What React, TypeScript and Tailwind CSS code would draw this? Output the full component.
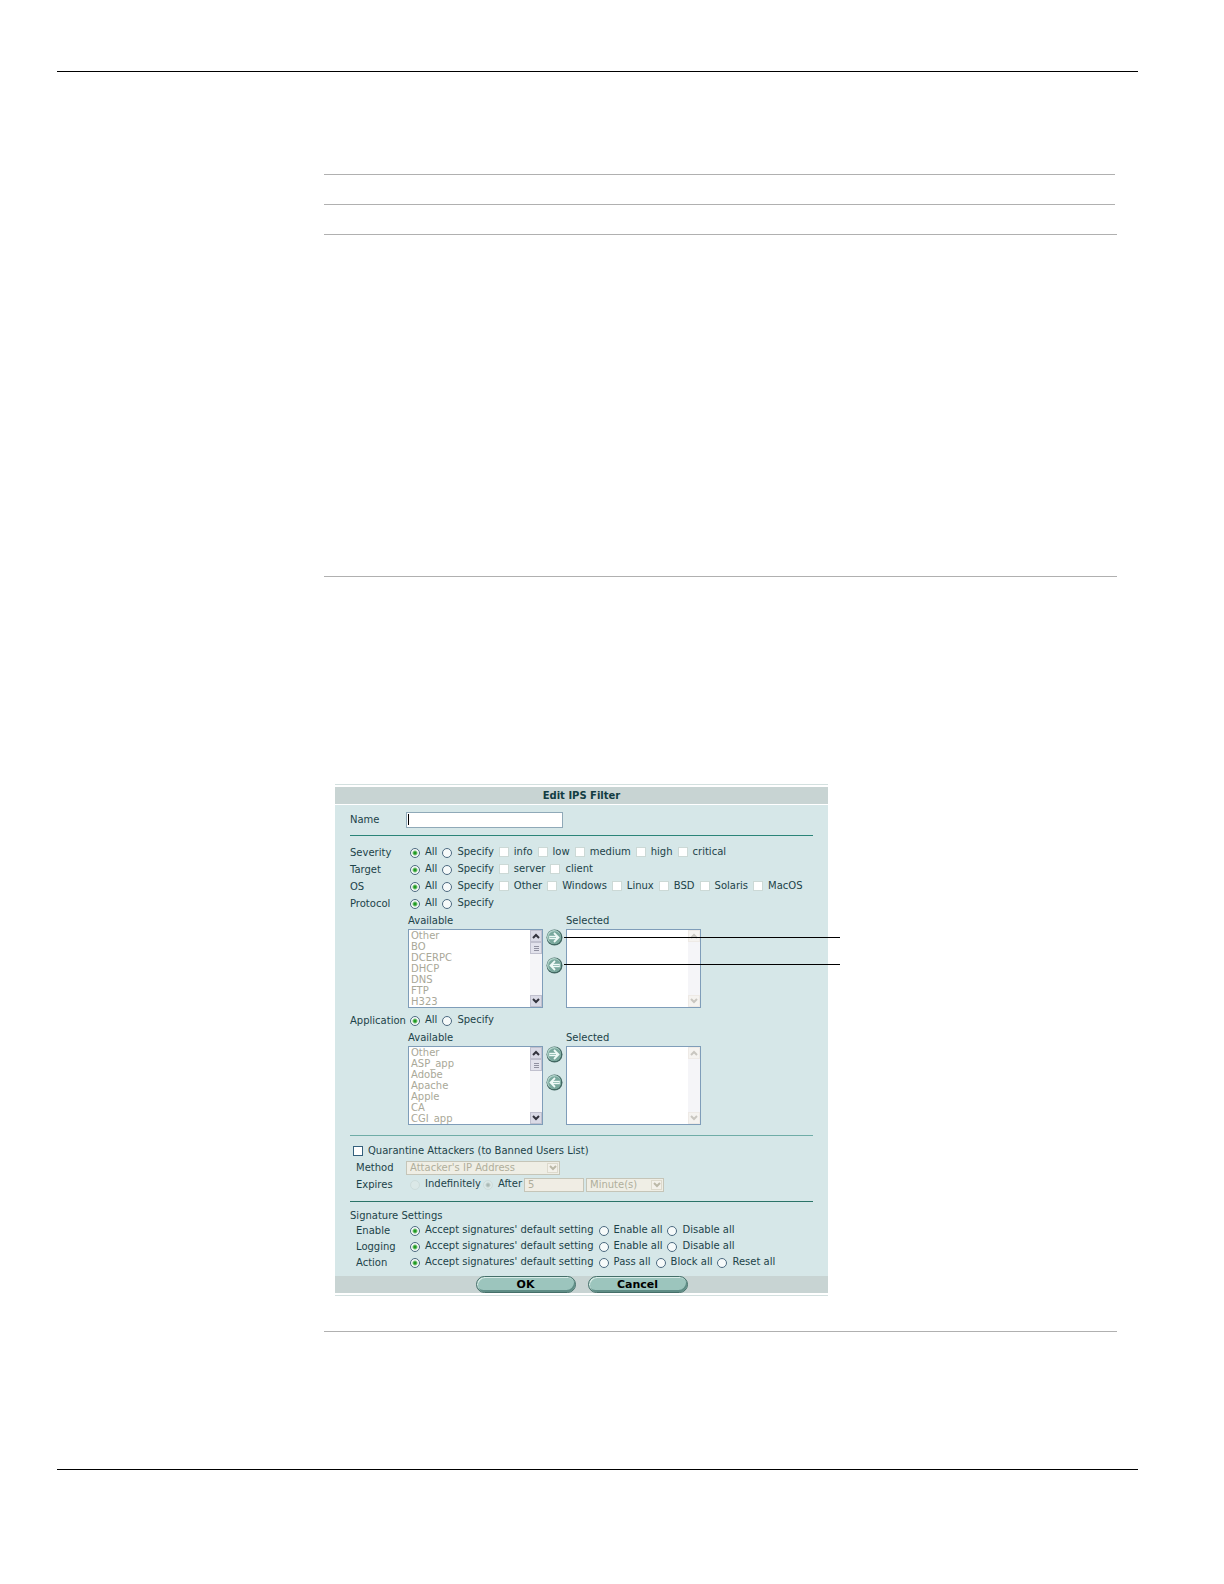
import React from "react";
import clsx from "clsx";

const protocols = ["Other", "BO", "DCERPC", "DHCP", "DNS", "FTP", "H323"];
const applications = ["Other", "ASP_app", "Adobe", "Apache", "Apple", "CA", "CGI_app"];

function Rule({ className }: { className?: string }) {
	return <hr className={clsx("h-px border-0", className)} />;
}

function Radio({
	name,
	label,
	checked,
	disabled,
}: {
	name: string;
	label: string;
	checked?: boolean;
	disabled?: boolean;
}) {
	return (
		<label className="flex h-full items-center gap-[5px]">
			<input
				type="radio"
				name={name}
				defaultChecked={checked}
				disabled={disabled}
				className="size-[10px] shrink-0 appearance-none rounded-full border border-[#4c6a80] bg-[#f6fafa] checked:bg-[radial-gradient(circle,#1f9a22_0_1px,#7cc47c_2px,#f6fafa_3px)] disabled:border-[#cddcdb] disabled:bg-[#dbe8e7] disabled:checked:bg-[radial-gradient(circle,#a9b8b4_0_1px,#dbe8e7_3px)]"
			/>
			<span className="-mt-[2px]">{label}</span>
		</label>
	);
}

function Check({ label }: { label: string }) {
	return (
		<label className="-mt-[2px] flex h-full items-center gap-[5px]">
			<input
				type="checkbox"
				disabled
				className="size-[10px] shrink-0 appearance-none border border-[#ccd9d6] bg-white"
			/>
			<span>{label}</span>
		</label>
	);
}

function Row({ label, children }: { label: string; children: React.ReactNode }) {
	return (
		<div className="flex h-[17px] items-center" role="group" aria-label={label}>
			<span className="w-[60px] shrink-0">{label}</span>
			<div className="flex h-full items-center gap-[5px]">{children}</div>
		</div>
	);
}

function Chevron({ up, className }: { up?: boolean; className?: string }) {
	return (
		<svg viewBox="0 0 8 6" className={clsx("h-[6px] w-2", className)} fill="none" stroke="currentColor" strokeWidth="2">
			<path d={up ? "M1 5 4 2l3 3" : "M1 1l3 3 3-3"} />
		</svg>
	);
}

function ListBox({ label, items }: { label: string; items: string[] }) {
	const empty = items.length === 0;
	return (
		<label className="block w-[135px]">
			<span className="block h-[15px]">{label}</span>
			<span className="flex h-[79px] border border-[#7f9db9] bg-white">
				<select
					multiple
					disabled
					className="h-full min-w-0 flex-1 appearance-none overflow-hidden bg-white opacity-100 outline-none [scrollbar-width:none]"
				>
					{items.map((item) => (
						<option key={item} className="h-[11px] min-h-0 px-[2px] py-0 leading-[11px] text-[#a9a898]">
							{item}
						</option>
					))}
				</select>
				<span
					className={clsx(
						"flex w-3 flex-col items-center bg-[#f5f5f8]",
						empty ? "text-[#c9c6c0]" : "text-[#33333d]"
					)}
				>
					<span
						className={clsx(
							"flex h-3 w-full items-center justify-center border",
							empty ? "border-[#eeeae6] bg-[#f5f3f0]" : "border-[#c0c0ce] bg-[#dadae6]"
						)}
					>
						<Chevron up />
					</span>
					{!empty && (
						<span className="flex h-3 w-full flex-col items-center justify-center gap-px border border-[#c0c0ce] bg-[#e2e2ec]">
							<span className="h-px w-[5px] bg-[#9090a0]" />
							<span className="h-px w-[5px] bg-[#9090a0]" />
							<span className="h-px w-[5px] bg-[#9090a0]" />
						</span>
					)}
					<span
						className={clsx(
							"mt-auto flex h-3 w-full items-center justify-center border",
							empty ? "border-[#eeeae6] bg-[#f5f3f0]" : "border-[#c0c0ce] bg-[#dadae6]"
						)}
					>
						<Chevron />
					</span>
				</span>
			</span>
		</label>
	);
}

function MoveButton({ left }: { left?: boolean }) {
	return (
		<button type="button" aria-label={left ? "Remove" : "Add"} className="block size-[17px]">
			<svg viewBox="0 0 17 17" className="size-[17px]">
				<circle cx="8.5" cy="8.5" r="8" fill="#426862" />
				<circle cx="8" cy="8" r="7" fill="#b4d6cd" />
				<circle cx="8.6" cy="8.6" r="6.4" fill="#79a89d" />
				<g transform={left ? "translate(17 0) scale(-1 1)" : undefined} fill="none" stroke="#effaf7">
					<path d="M3.2 8.5H11" strokeWidth="3.4" />
					<path d="M8 4l4.5 4.5L8 13" strokeWidth="1.8" />
					<path d="M3.6 8.5H10" stroke="#9cc4bb" strokeWidth="1" />
				</g>
			</svg>
		</button>
	);
}

function Picker({ items, callouts }: { items: string[]; callouts?: boolean }) {
	return (
		<div className="relative mt-[2px] ml-[58px] flex">
			<ListBox label="Available" items={items} />
			<div className="flex w-[23px] flex-col items-center gap-[11px] pt-[15px]">
				<MoveButton />
				<MoveButton left />
			</div>
			<ListBox label="Selected" items={[]} />
			{callouts && (
				<div className="absolute top-[23px] left-[156px] flex w-[276px] flex-col gap-[26px]">
					<Rule className="bg-black" />
					<Rule className="bg-black" />
				</div>
			)}
		</div>
	);
}

function DisabledSelect({ label, value, className }: { label: string; value: string; className?: string }) {
	return (
		<div className={clsx("relative", className)}>
			<select
				aria-label={label}
				disabled
				className="block h-[14px] w-full appearance-none border border-[#c5c5b8] bg-[#efeee5] px-[3px] leading-[12px] text-[#b0ae9c] opacity-100"
			>
				<option>{value}</option>
			</select>
			<span className="pointer-events-none absolute inset-y-[2px] right-[2px] flex w-[11px] items-center justify-center border border-[#dddacd] bg-[#f3f1ea] text-[#bcb9a8]">
				<Chevron />
			</span>
		</div>
	);
}

function PillButton({ children }: { children: string }) {
	return (
		<button
			type="button"
			className="h-[17px] w-[100px] rounded-full border border-[#456f69] bg-[#9cc5bd] text-[11px] leading-[16px] font-bold text-black shadow-[inset_1px_1px_0_#d8ece7,inset_-1px_-2px_0_#5f8d86]"
		>
			{children}
		</button>
	);
}

function SignatureRow({ label, options }: { label: string; options: string[] }) {
	return (
		<div className="flex h-4 items-center" role="group" aria-label={label}>
			<span className="w-[60px] shrink-0 pl-[6px]">{label}</span>
			<div className="flex h-full items-center gap-[5px]">
				<Radio name={label} label="Accept signatures' default setting" checked />
				{options.map((option) => (
					<Radio key={option} name={label} label={option} />
				))}
			</div>
		</div>
	);
}

function FilterDialog() {
	return (
		<form className="w-[493px] border-y border-[#d3e0df] py-[2px]">
			<h1 className="h-[17px] bg-[#c8d4d3] text-center text-[10px] leading-[17px] font-bold text-[#123c42]">
				Edit IPS Filter
			</h1>
			<div className="mt-px bg-[#d6e7e8] px-[15px] pt-[7px] pb-[5px]">
				<div className="flex h-4 items-center">
					<label htmlFor="name" className="w-[56px]">
						Name
					</label>
					<div className="relative">
						<input id="name" type="text" className="block h-4 w-[157px] border border-[#8fa9b8] bg-white px-[2px] outline-none" />
						<span className="absolute top-[2px] left-[2px] h-[11px] w-px bg-black" />
					</div>
				</div>
				<Rule className="mt-[7px] mb-2 bg-[#2b8478]" />
				<Row label="Severity">
					<Radio name="severity" label="All" checked />
					<Radio name="severity" label="Specify" />
					{["info", "low", "medium", "high", "critical"].map((s) => (
						<Check key={s} label={s} />
					))}
				</Row>
				<Row label="Target">
					<Radio name="target" label="All" checked />
					<Radio name="target" label="Specify" />
					<Check label="server" />
					<Check label="client" />
				</Row>
				<Row label="OS">
					<Radio name="os" label="All" checked />
					<Radio name="os" label="Specify" />
					{["Other", "Windows", "Linux", "BSD", "Solaris", "MacOS"].map((s) => (
						<Check key={s} label={s} />
					))}
				</Row>
				<Row label="Protocol">
					<Radio name="protocol" label="All" checked />
					<Radio name="protocol" label="Specify" />
				</Row>
				<Picker items={protocols} callouts />
				<div className="mt-1">
					<Row label="Application">
						<Radio name="application" label="All" checked />
						<Radio name="application" label="Specify" />
					</Row>
				</div>
				<Picker items={applications} />
				<Rule className="mt-[10px] mb-[6px] bg-[#6fada7]" />
				<label className="flex h-[17px] items-center gap-[5px] pl-[3px]">
					<input type="checkbox" className="size-[10px] appearance-none border border-[#34607c] bg-white" />
					Quarantine Attackers (to Banned Users List)
				</label>
				<div className="flex h-[17px] items-center">
					<span className="w-[56px] pl-[6px]">Method</span>
					<DisabledSelect label="Method" value="Attacker's IP Address" className="w-[154px]" />
				</div>
				<div className="flex h-[18px] items-center">
					<span className="w-[60px] pl-[6px]">Expires</span>
					<div className="flex h-full items-center gap-[2px]">
						<Radio name="expires" label="Indefinitely" disabled />
						<Radio name="expires" label="After" checked disabled />
						<input
							type="text"
							aria-label="Duration"
							disabled
							defaultValue="5"
							className="h-[14px] w-[60px] border border-[#c5c5b8] bg-[#f0ede4] px-[3px] text-[#b0ae9c]"
						/>
						<DisabledSelect label="Unit" value="Minute(s)" className="w-[78px]" />
					</div>
				</div>
				<Rule className="mt-[7px] mb-[7px] bg-[#2b7468]" />
				<h2>Signature Settings</h2>
				<SignatureRow label="Enable" options={["Enable all", "Disable all"]} />
				<SignatureRow label="Logging" options={["Enable all", "Disable all"]} />
				<SignatureRow label="Action" options={["Pass all", "Block all", "Reset all"]} />
			</div>
			<div className="flex justify-center gap-3 bg-[#c8d4d3]">
				<PillButton>OK</PillButton>
				<PillButton>Cancel</PillButton>
			</div>
		</form>
	);
}

export default function App() {
	return (
		<main className="min-h-screen bg-white pt-[71px] pr-[86px] pb-[114px] pl-[57px] font-['DejaVu_Sans',sans-serif] text-[10px] leading-[14px] whitespace-nowrap text-[#1c4348]">
			<Rule className="bg-black" />
			<section className="pt-[102px] pr-[21px] pb-[137px] pl-[267px]">
				<Rule className="mr-[2px] bg-[#b0b0b0]" />
				<Rule className="mt-[29px] mr-[2px] bg-[#b0b0b0]" />
				<Rule className="mt-[29px] bg-[#b0b0b0]" />
				<Rule className="mt-[341px] bg-[#b0b0b0]" />
				<div className="mt-[207px] mb-[35px] pl-[11px]">
					<FilterDialog />
				</div>
				<Rule className="bg-[#b0b0b0]" />
			</section>
			<Rule className="bg-black" />
		</main>
	);
}
